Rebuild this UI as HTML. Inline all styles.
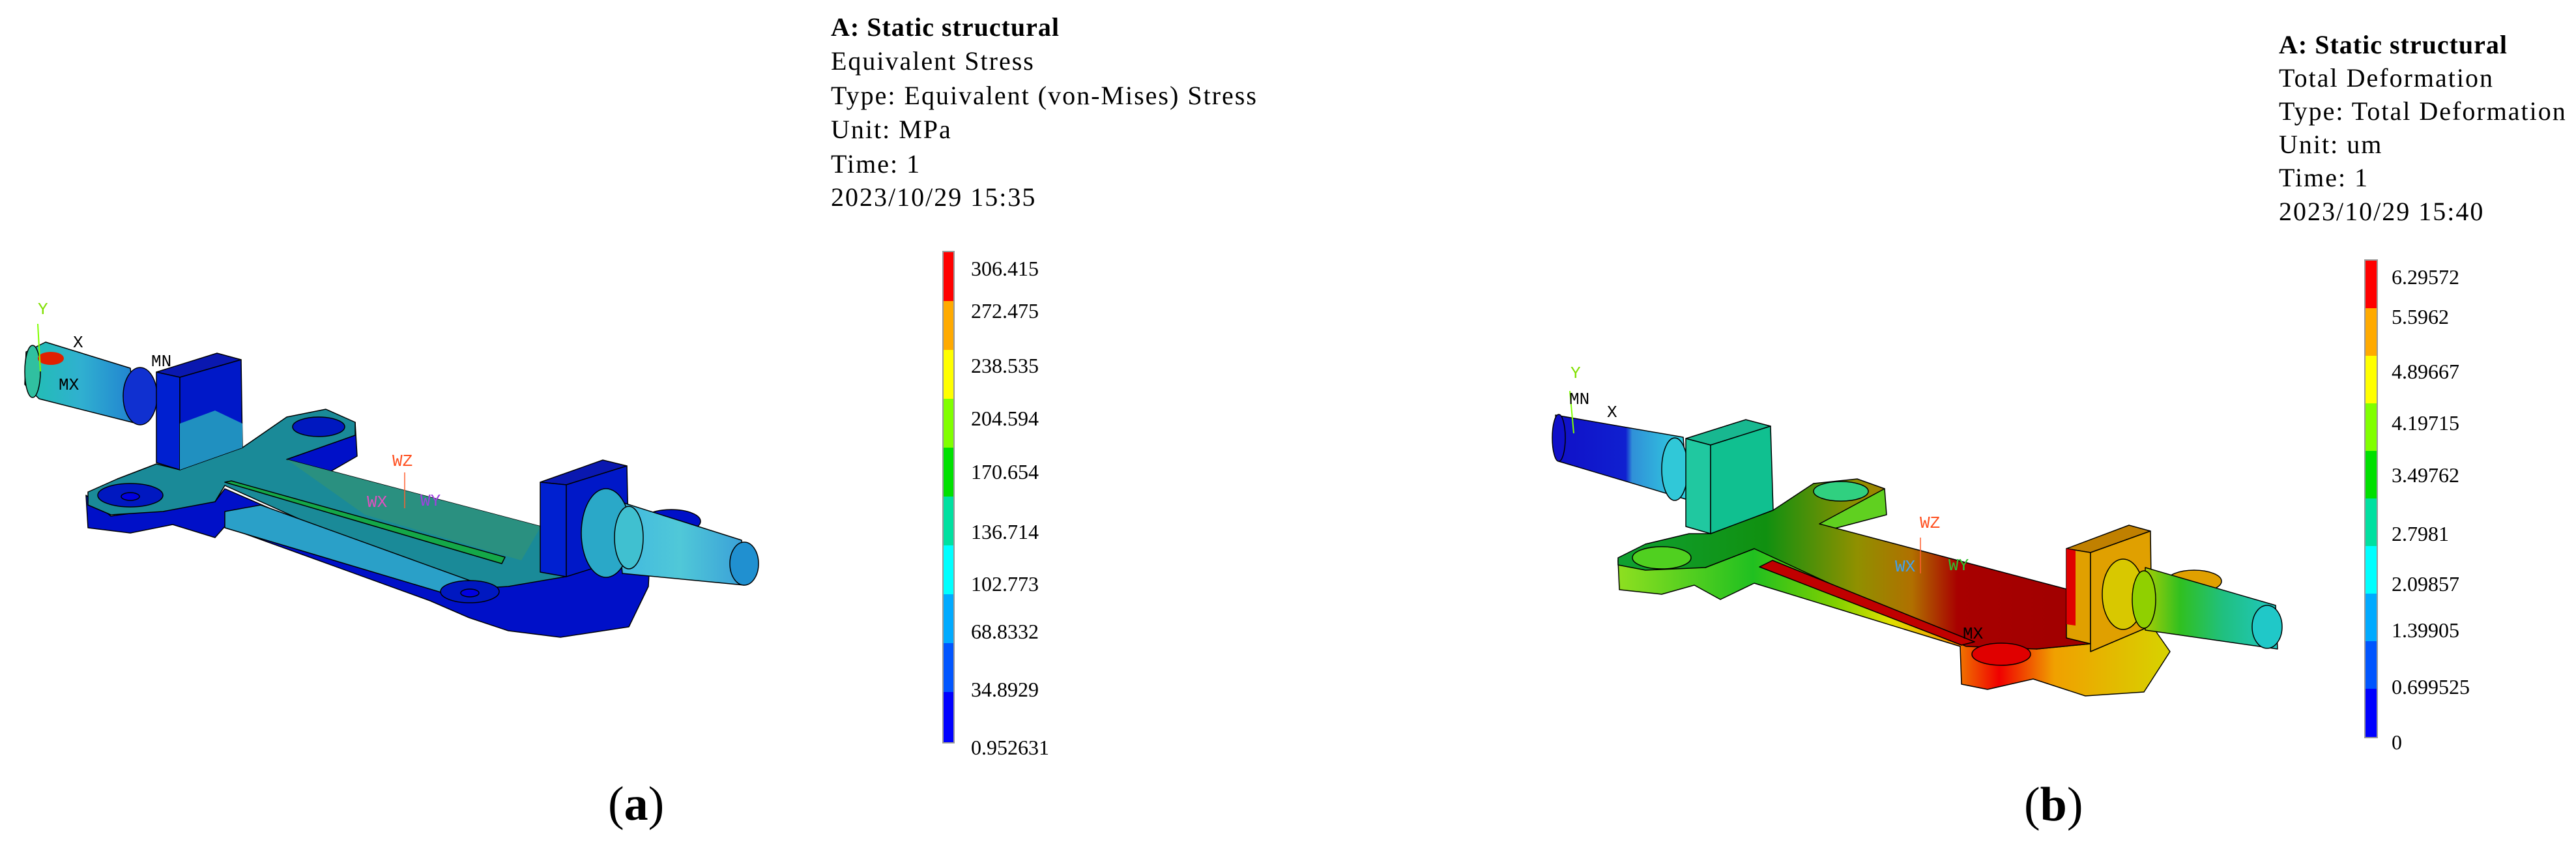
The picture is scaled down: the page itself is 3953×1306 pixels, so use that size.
<!DOCTYPE html>
<html><head><meta charset="utf-8"><style>
html,body{margin:0;padding:0;background:#fff;width:3953px;height:1306px;overflow:hidden}
svg{display:block}
.t{font-family:"Liberation Serif",serif;font-size:40px;fill:#000;letter-spacing:2px}
.b{font-weight:bold;letter-spacing:1px}
.l{font-family:"Liberation Serif",serif;font-size:32px;fill:#000}
.ax{font-family:"Liberation Mono",monospace;font-size:26px}
</style></head><body>
<svg width="3953" height="1306" viewBox="0 0 3953 1306" xmlns="http://www.w3.org/2000/svg">
<defs>
<linearGradient id="shL" x1="0" y1="0" x2="1" y2="0">
<stop offset="0" stop-color="#20c0b0"/><stop offset="0.5" stop-color="#30b0d0"/><stop offset="1" stop-color="#2080d0"/></linearGradient>
<linearGradient id="shR" x1="0" y1="0" x2="1" y2="0">
<stop offset="0" stop-color="#40b8e0"/><stop offset="0.5" stop-color="#50c8d8"/><stop offset="1" stop-color="#3aa0d8"/></linearGradient>
<linearGradient id="topR" x1="2500" y1="0" x2="3200" y2="0" gradientUnits="userSpaceOnUse">
<stop offset="0" stop-color="#10a030"/><stop offset="0.3" stop-color="#109010"/><stop offset="0.5" stop-color="#909000"/><stop offset="0.62" stop-color="#b07000"/><stop offset="0.72" stop-color="#a80000"/><stop offset="1" stop-color="#a00000"/></linearGradient>
<linearGradient id="sideR" x1="2480" y1="0" x2="3320" y2="0" gradientUnits="userSpaceOnUse">
<stop offset="0" stop-color="#90e020"/><stop offset="0.25" stop-color="#20c020"/><stop offset="0.4" stop-color="#80d000"/><stop offset="0.5" stop-color="#e0e000"/><stop offset="0.6" stop-color="#f0a000"/><stop offset="0.7" stop-color="#f00000"/><stop offset="0.8" stop-color="#f0a000"/><stop offset="1" stop-color="#d8d000"/></linearGradient>
<linearGradient id="shaftR1" x1="2387" y1="0" x2="2583" y2="0" gradientUnits="userSpaceOnUse">
<stop offset="0" stop-color="#1010c8"/><stop offset="0.55" stop-color="#1020d0"/><stop offset="0.6" stop-color="#3090d8"/><stop offset="1" stop-color="#30d0e0"/></linearGradient>
<linearGradient id="shaftR2" x1="3280" y1="0" x2="3500" y2="0" gradientUnits="userSpaceOnUse">
<stop offset="0" stop-color="#c0d000"/><stop offset="0.3" stop-color="#30c020"/><stop offset="0.6" stop-color="#20c080"/><stop offset="1" stop-color="#20c8c8"/></linearGradient>
</defs>

<!-- LEFT MODEL -->
<g stroke="#000" stroke-width="1.5" stroke-linejoin="round">
<polygon fill="#0010c8" points="132,760 135,810 200,818 265,805 330,825 345,808 660,922 720,948 780,968 860,978 965,962 995,900 1000,800 870,820 868,885 700,905 345,750 330,770 170,792"/>
<polygon fill="#0010c8" points="440,660 545,648 548,700 470,745 440,705"/>
<ellipse cx="1030" cy="800" rx="45" ry="18" fill="#0010c8"/>
<polygon fill="#1a8a98" points="135,755 180,735 240,712 276,721 372,687 440,640 500,628 545,648 545,668 440,705 830,808 870,822 868,885 780,900 700,905 345,745 330,770 250,785 170,790 135,775"/>
<polygon fill="#2a9080" stroke="none" points="440,705 830,808 800,860 560,790"/>
<polygon fill="#14a848" points="345,740 355,738 775,855 770,865"/>
<polygon fill="#2aa0c8" points="345,785 400,775 760,905 680,910 345,810"/>
<ellipse cx="200" cy="760" rx="50" ry="18" fill="#0018c0"/>
<ellipse cx="200" cy="762" rx="14" ry="6" fill="#0000e0"/>
<ellipse cx="489" cy="655" rx="40" ry="15" fill="#0018c0"/>
<ellipse cx="721" cy="908" rx="45" ry="17" fill="#0018c0"/>
<ellipse cx="721" cy="910" rx="14" ry="6" fill="#0000e0"/>
<polygon fill="url(#shL)" points="40,540 70,525 200,565 210,650 60,612 38,590"/>
<ellipse cx="50" cy="570" rx="12" ry="40" fill="#30c0a0"/>
<ellipse cx="78" cy="550" rx="20" ry="10" fill="#e02000" stroke="none"/>
<ellipse cx="215" cy="608" rx="26" ry="44" fill="#1030d0"/>
<polygon fill="#0a18b0" points="240,571 333,542 370,552 276,579"/>
<polygon fill="#0020d0" points="240,571 276,579 276,721 240,710"/>
<polygon fill="#0018c8" points="276,579 370,552 372,687 276,721"/>
<polygon fill="#2090c0" stroke="none" points="276,650 330,630 372,650 372,687 276,721"/>
<polygon fill="#0a18b0" points="829,740 925,706 962,715 869,744"/>
<polygon fill="#0020d0" points="829,740 869,744 869,885 829,878"/>
<polygon fill="#0018c8" points="869,744 962,715 965,855 869,885"/>
<polygon fill="url(#shR)" points="945,768 1138,829 1142,898 955,880"/>
<ellipse cx="930" cy="818" rx="38" ry="68" fill="#2aa8c8"/>
<ellipse cx="965" cy="825" rx="22" ry="48" fill="#40c0d0"/>
<ellipse cx="1142" cy="865" rx="22" ry="33" fill="#2090d0"/>
</g>
<line x1="58" y1="497" x2="62" y2="570" stroke="#80ff00" stroke-width="2"/>
<line x1="621" y1="725" x2="621" y2="780" stroke="#ff6030" stroke-width="1.5"/>
<text class="ax" x="58" y="482" fill="#80e000">Y</text>
<text class="ax" x="112" y="533" fill="#000">X</text>
<text class="ax" x="90" y="598" fill="#000">MX</text>
<text class="ax" x="232" y="562" fill="#000">MN</text>
<text class="ax" x="602" y="715" fill="#ff5020">WZ</text>
<text class="ax" x="563" y="778" fill="#e050c0">WX</text>
<text class="ax" x="645" y="776" fill="#a040e0">WY</text>

<!-- RIGHT MODEL -->
<g stroke="#000" stroke-width="1.5" stroke-linejoin="round">
<polygon fill="url(#sideR)" points="2483,860 2485,905 2550,912 2600,898 2640,920 2692,895 3008,992 3010,1050 3050,1058 3120,1042 3200,1068 3290,1062 3330,1000 3302,960 3300,880 3208,904 3208,988 3125,996 2692,842 2617,871"/>
<polygon fill="#60d020" points="2783,742 2892,750 2895,790 2800,815 2792,804"/>
<ellipse cx="3367" cy="892" rx="42" ry="17" fill="#e0a000"/>
<polygon fill="url(#topR)" points="2483,856 2525,835 2592,819 2625,819 2721,783 2783,742 2850,735 2892,750 2792,804 3171,904 3208,904 3208,988 3125,996 3017,992 2692,842 2617,871 2525,875 2483,867"/>
<polygon fill="#c00000" points="2700,870 3010,990 3030,985 2720,860"/>
<ellipse cx="2550" cy="856" rx="45" ry="17" fill="#50d020"/>
<ellipse cx="2825" cy="754" rx="42" ry="15" fill="#30d080"/>
<ellipse cx="3071" cy="1004" rx="45" ry="17" fill="#e00000"/>
<polygon fill="url(#shaftR1)" points="2387,637 2583,671 2590,767 2392,708"/>
<ellipse cx="2392" cy="672" rx="10" ry="36" fill="#1010c8"/>
<ellipse cx="2570" cy="720" rx="20" ry="48" fill="#30c8d8"/>
<polygon fill="#18b890" points="2587,673 2679,644 2717,654 2625,683"/>
<polygon fill="#20c8a0" points="2587,673 2625,683 2625,819 2587,808"/>
<polygon fill="#10c090" points="2625,683 2717,654 2721,783 2625,819"/>
<polygon fill="#c08000" points="3171,842 3267,806 3300,815 3208,848"/>
<polygon fill="#e0a000" points="3171,842 3208,848 3208,988 3171,979"/>
<polygon fill="#e00000" stroke="none" points="3171,842 3185,845 3185,960 3171,958"/>
<polygon fill="#e0a000" points="3208,848 3300,815 3302,960 3208,1000"/>
<polygon fill="url(#shaftR2)" points="3292,871 3492,929 3495,996 3292,967"/>
<ellipse cx="3258" cy="912" rx="32" ry="54" fill="#d8c800"/>
<ellipse cx="3290" cy="920" rx="18" ry="44" fill="#90d000"/>
<ellipse cx="3479" cy="962" rx="23" ry="33" fill="#20c8c8"/>
</g>
<line x1="2409" y1="600" x2="2415" y2="665" stroke="#80ff00" stroke-width="2"/>
<line x1="2947" y1="825" x2="2947" y2="880" stroke="#ff6030" stroke-width="1.5"/>
<text class="ax" x="2410" y="580" fill="#80e000">Y</text>
<text class="ax" x="2408" y="620" fill="#000">MN</text>
<text class="ax" x="2466" y="640" fill="#000">X</text>
<text class="ax" x="2946" y="810" fill="#ff5020">WZ</text>
<text class="ax" x="2908" y="877" fill="#40a0f0">WX</text>
<text class="ax" x="2990" y="875" fill="#30c030">WY</text>
<text class="ax" x="3012" y="980" fill="#000">MX</text>

<!-- LEFT LEGEND -->
<text class="t b" x="1275" y="55">A: Static structural</text>
<text class="t" x="1275" y="107">Equivalent Stress</text>
<text class="t" x="1275" y="160">Type: Equivalent (von-Mises) Stress</text>
<text class="t" x="1275" y="212">Unit: MPa</text>
<text class="t" x="1275" y="265">Time: 1</text>
<text class="t" x="1275" y="316">2023/10/29 15:35</text>
<g>
<rect x="1446" y="385" width="19" height="756" fill="#999"/>
<rect x="1448" y="387" width="15" height="76" fill="#ff0000"/>
<rect x="1448" y="462" width="15" height="76" fill="#ffaa00"/>
<rect x="1448" y="537" width="15" height="76" fill="#ffff00"/>
<rect x="1448" y="612" width="15" height="76" fill="#80ff00"/>
<rect x="1448" y="687" width="15" height="76" fill="#00e000"/>
<rect x="1448" y="762" width="15" height="76" fill="#00e0a0"/>
<rect x="1448" y="837" width="15" height="76" fill="#00ffff"/>
<rect x="1448" y="912" width="15" height="76" fill="#00aaff"/>
<rect x="1448" y="987" width="15" height="76" fill="#0055ff"/>
<rect x="1448" y="1062" width="15" height="77" fill="#0000ff"/>
</g>
<text class="l" x="1490" y="423">306.415</text>
<text class="l" x="1490" y="488">272.475</text>
<text class="l" x="1490" y="572">238.535</text>
<text class="l" x="1490" y="653">204.594</text>
<text class="l" x="1490" y="735">170.654</text>
<text class="l" x="1490" y="827">136.714</text>
<text class="l" x="1490" y="907">102.773</text>
<text class="l" x="1490" y="980">68.8332</text>
<text class="l" x="1490" y="1069">34.8929</text>
<text class="l" x="1490" y="1158">0.952631</text>

<!-- RIGHT LEGEND -->
<text class="t b" x="3497" y="82">A: Static structural</text>
<text class="t" x="3497" y="133">Total Deformation</text>
<text class="t" x="3497" y="184">Type: Total Deformation</text>
<text class="t" x="3497" y="235">Unit: um</text>
<text class="t" x="3497" y="286">Time: 1</text>
<text class="t" x="3497" y="338">2023/10/29 15:40</text>
<g>
<rect x="3628" y="398" width="21" height="735" fill="#999"/>
<rect x="3630" y="400" width="17" height="73" fill="#ff0000"/>
<rect x="3630" y="473" width="17" height="73" fill="#ffaa00"/>
<rect x="3630" y="546" width="17" height="73" fill="#ffff00"/>
<rect x="3630" y="619" width="17" height="73" fill="#80ff00"/>
<rect x="3630" y="692" width="17" height="73" fill="#00e000"/>
<rect x="3630" y="765" width="17" height="73" fill="#00e0a0"/>
<rect x="3630" y="838" width="17" height="73" fill="#00ffff"/>
<rect x="3630" y="911" width="17" height="73" fill="#00aaff"/>
<rect x="3630" y="984" width="17" height="73" fill="#0055ff"/>
<rect x="3630" y="1057" width="17" height="74" fill="#0000ff"/>
</g>
<text class="l" x="3670" y="436">6.29572</text>
<text class="l" x="3670" y="497">5.5962</text>
<text class="l" x="3670" y="581">4.89667</text>
<text class="l" x="3670" y="660">4.19715</text>
<text class="l" x="3670" y="740">3.49762</text>
<text class="l" x="3670" y="830">2.7981</text>
<text class="l" x="3670" y="907">2.09857</text>
<text class="l" x="3670" y="978">1.39905</text>
<text class="l" x="3670" y="1065">0.699525</text>
<text class="l" x="3670" y="1150">0</text>

<text x="933" y="1258" font-family="Liberation Serif,serif" font-size="74px" fill="#000">(<tspan font-weight="bold">a</tspan>)</text>
<text x="3106" y="1259" font-family="Liberation Serif,serif" font-size="74px" fill="#000">(<tspan font-weight="bold">b</tspan>)</text>
</svg>
</body></html>
